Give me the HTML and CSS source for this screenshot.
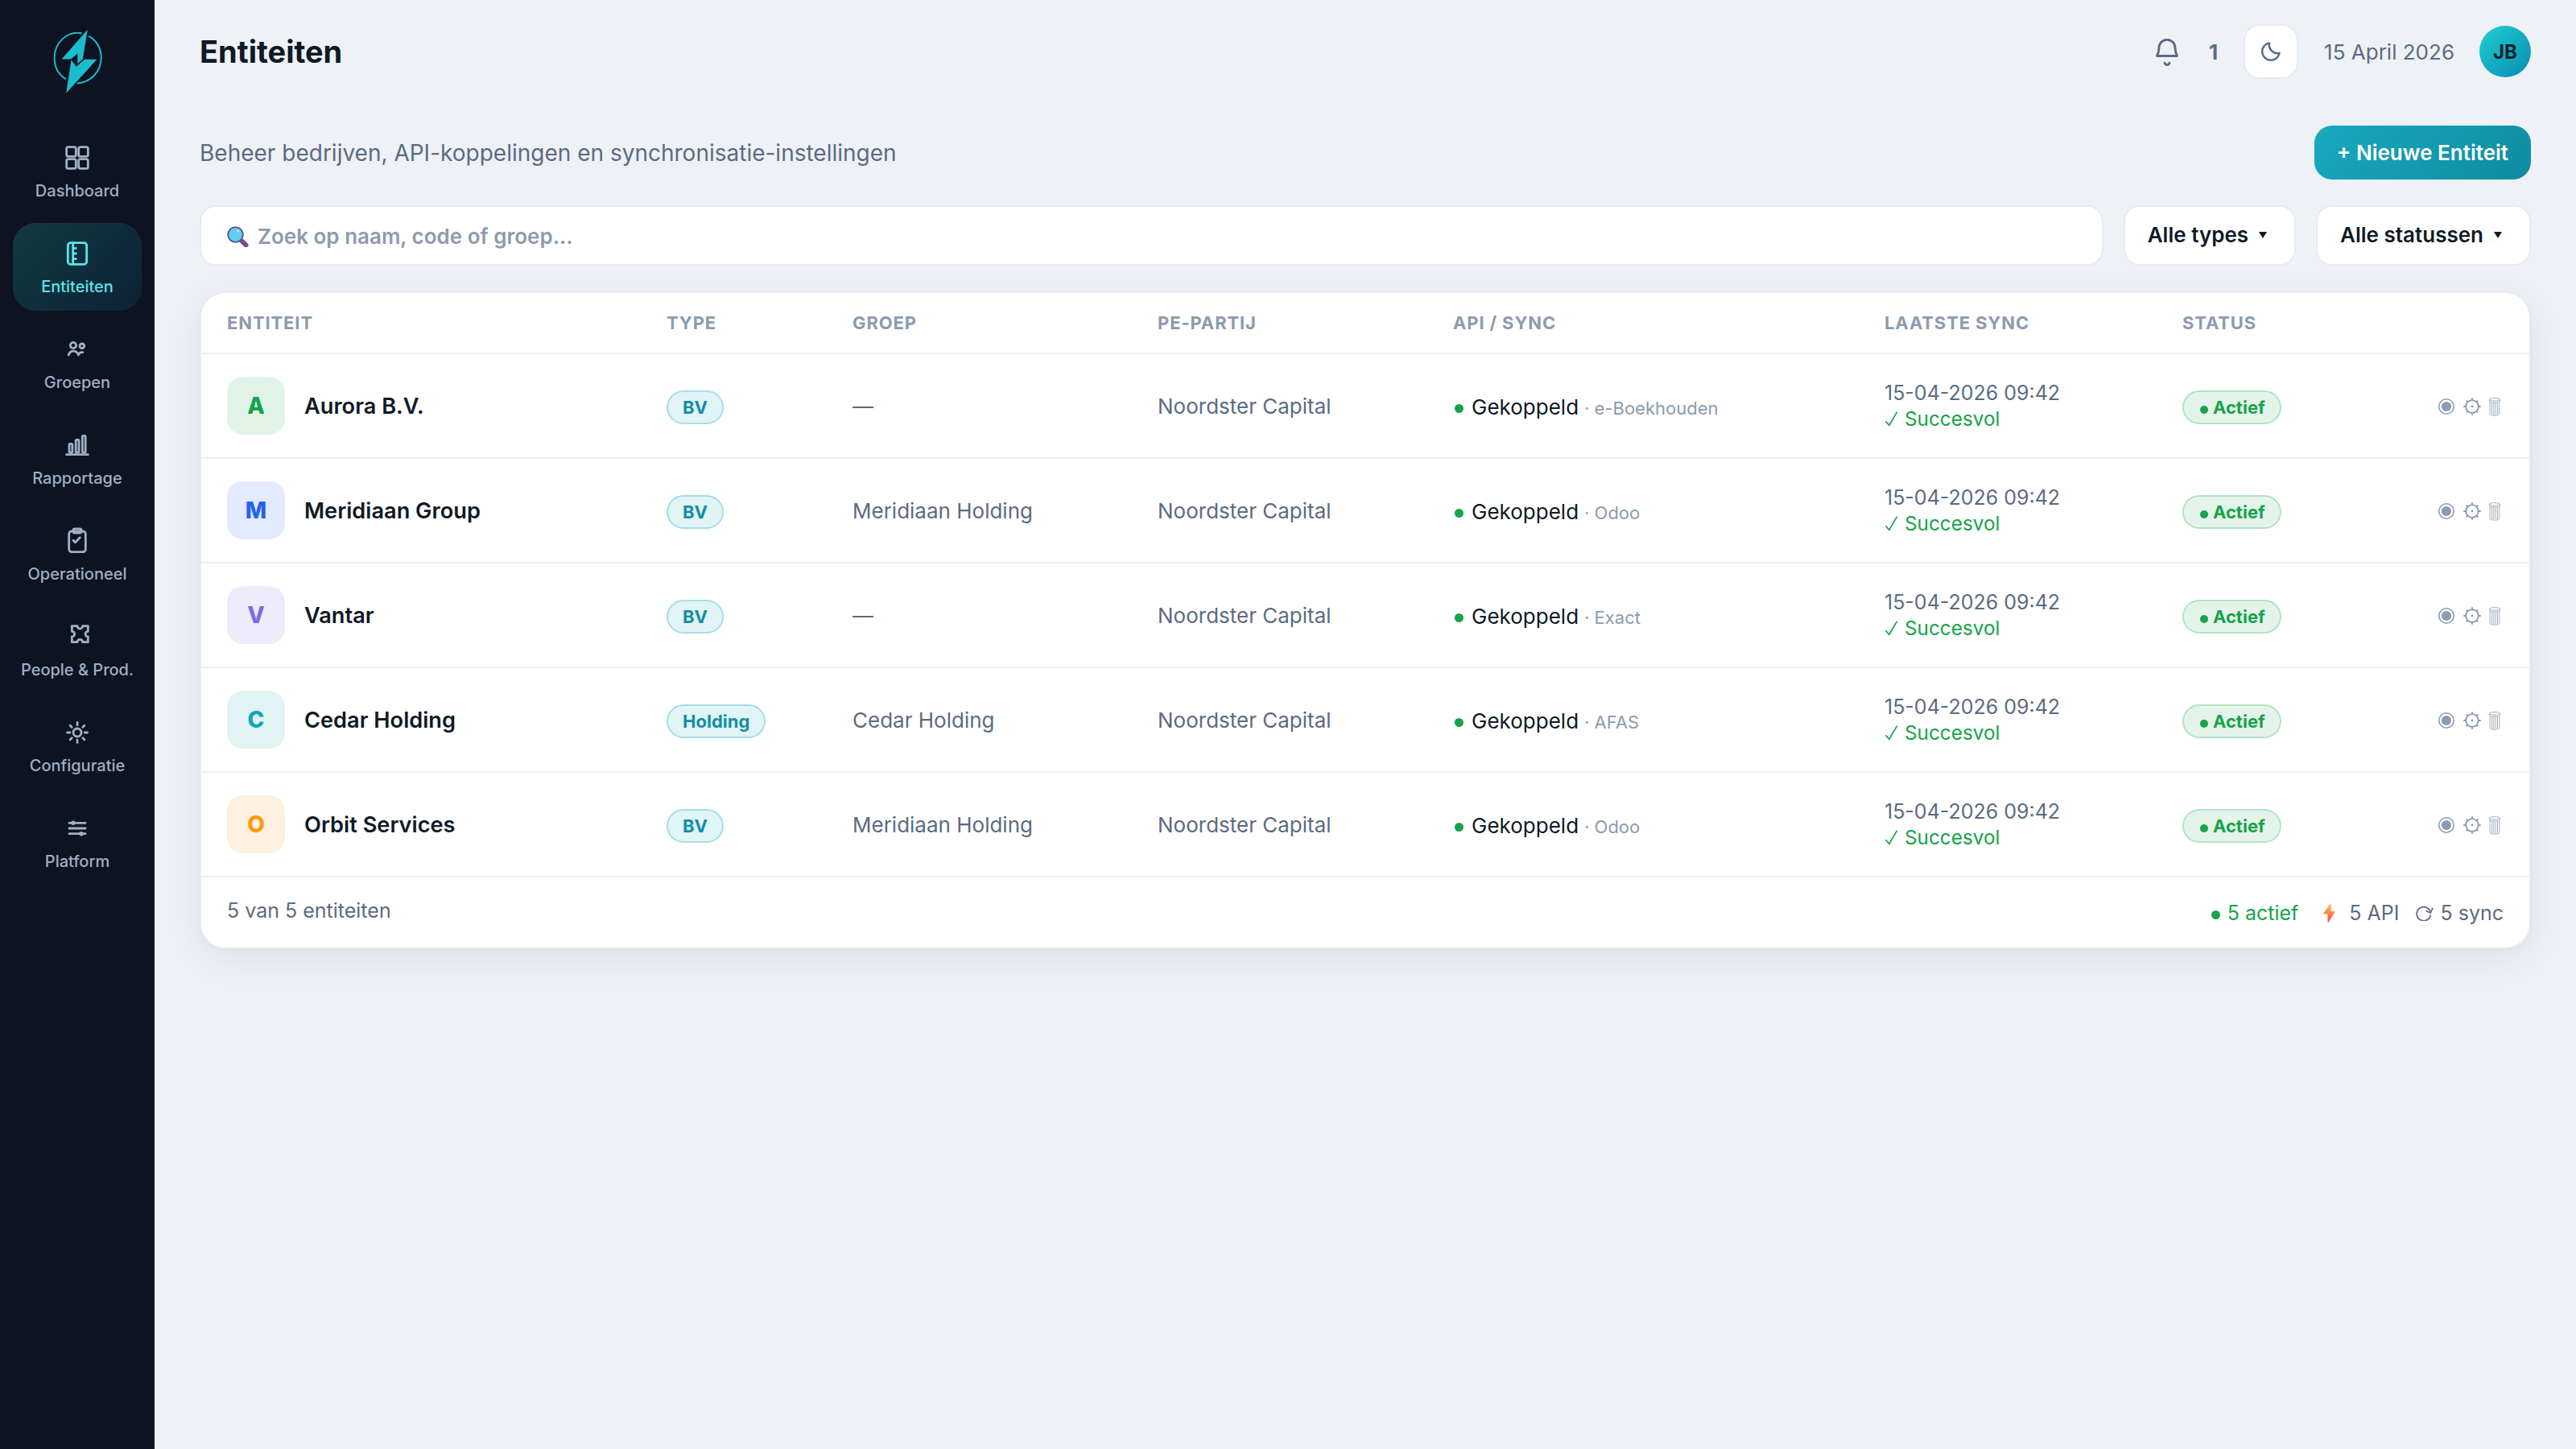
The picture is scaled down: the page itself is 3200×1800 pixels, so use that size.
FILE: index.html
```html
<!DOCTYPE html>
<html lang="nl">
<head>
    <meta charset="UTF-8">
    <meta name="viewport" content="width=device-width, initial-scale=1.0">
    <title>Entiteiten</title>
    <link rel="stylesheet" href="styles.css">
</head>
<body>

<!-- Shared icons -->
<svg class="sprite" width="0" height="0">
    <symbol id="i-check" viewBox="0 0 18 20">
        <path d="M1.5 13.2l4.3 5L15.6 1.6" fill="none" stroke="currentColor" stroke-width="1.7"/>
    </symbol>
    <symbol id="i-view" viewBox="0 0 22 22">
        <circle cx="11" cy="11" r="9.2" fill="none" stroke="currentColor" stroke-width="1.6"/>
        <circle cx="11" cy="11" r="6.1" fill="currentColor"/>
    </symbol>
    <symbol id="i-gear" viewBox="0 0 22 22">
        <g fill="none" stroke="currentColor" stroke-width="1.8">
            <circle cx="11" cy="11" r="7.8"/>
            <path d="M11 .3v2.9M11 18.8v2.9M.3 11h2.9M18.8 11h2.9M3.7 3.7l1.8 1.8M16.5 16.5l1.8 1.8M3.7 18.3l1.8-1.8M16.5 5.500l1.8-1.8"/>
        </g>
        <circle cx="11" cy="11" r="1.4" fill="currentColor"/>
    </symbol>
    <symbol id="i-trash" viewBox="0 0 14 23">
        <g fill="none" stroke="currentColor" stroke-width=".8">
            <ellipse cx="7" cy="2.300" rx="6.500" ry="1.700"/>
            <path d="M.5 2.300v2.200c0 2 13 2 13 0V2.300M1.200 5.400v14.800c0 2.600 11.600 2.600 11.600 0V5.400M3.600 6.200v14.600M5.900 6.400v15M8.200 6.400v15M10.500 6.200v14.600"/>
        </g>
    </symbol>
</svg>

<aside class="sidebar">
    <svg class="logo" viewBox="197 107 182 241" width="61" height="80">
        <g fill="none" stroke="#1bbccb" stroke-width="6">
            <path d="M303 123C250 112 201 158 201 215c0 35 17 64 43 80"/>
            <path d="M329 134c29 15 47 45 47 80 0 52-38 93-90 96"/>
        </g>
        <path fill="#1bbccb" d="M325 109L228 220h35l25-22-1 40 20-18z"/>
        <path fill="#1bbccb" d="M245 347l19-125 19 26 31-27h46z"/>
    </svg>
    <nav class="nav">
        <a class="nav-item">
            <svg class="nav-icon" viewBox="0 0 24 24"><rect x="4" y="4" width="7" height="7" rx="1.300"/><rect x="13" y="4" width="7" height="7" rx="1.300"/><rect x="4" y="13" width="7" height="7" rx="1.300"/><rect x="13" y="13" width="7" height="7" rx="1.300"/></svg>
            <span>Dashboard</span>
        </a>
        <a class="nav-item active">
            <svg class="nav-icon" viewBox="0 0 24 24"><rect x="5" y="4" width="14" height="16" rx="2"/><path d="M8.800 4v16M9 8h2M9 12h2M9 16h2"/></svg>
            <span>Entiteiten</span>
        </a>
        <a class="nav-item">
            <svg class="nav-icon" viewBox="0 0 24 24"><circle cx="9" cy="9" r="2.200"/><circle cx="15.500" cy="9.500" r="1.700"/><path d="M5.500 16.200c.6-1.900 1.900-2.900 3.500-2.900s3.200 1.100 3.900 2.900c.3-1.300 1.500-2.200 3.200-2"/></svg>
            <span>Groepen</span>
        </a>
        <a class="nav-item">
            <svg class="nav-icon" viewBox="0 0 24 24"><path d="M4 19h16"/><rect x="6" y="11" width="2.300" height="6.500" rx=".6"/><rect x="10.900" y="8" width="2.300" height="9.500" rx=".6"/><rect x="15.800" y="5" width="2.300" height="12.500" rx=".6"/></svg>
            <span>Rapportage</span>
        </a>
        <a class="nav-item">
            <svg class="nav-icon" viewBox="0 0 24 24"><rect x="5.800" y="4.800" width="12.400" height="15.400" rx="2"/><rect x="9" y="3" width="6" height="3" rx="1"/><path d="M9 11.500l1.500 1.500 3.500-3.500"/></svg>
            <span>Operationeel</span>
        </a>
        <a class="nav-item">
            <svg class="nav-icon" viewBox="0 0 24 24"><path d="M8 4h4a2 2 0 0 0 4 0h4v4a2 2 0 0 0 0 4v4h-4a2 2 0 0 0-4 0H8v-4a2 2 0 0 0 0-4z"/></svg>
            <span>People &amp; Prod.</span>
        </a>
        <a class="nav-item">
            <svg class="nav-icon" viewBox="0 0 24 24"><circle cx="12" cy="12" r="3"/><path d="M12 4.500v2M12 17.500v2M4.500 12h2M17.500 12h2M6.700 6.700l1.200 1.200M16.100 16.100l1.200 1.200M6.700 17.300l1.200-1.200M16.100 7.900l1.200-1.200"/></svg>
            <span>Configuratie</span>
        </a>
        <a class="nav-item">
            <svg class="nav-icon" viewBox="0 0 24 24"><path d="M6 8h12M6 12h12M6 16h12"/><circle cx="9" cy="8" r=".8"/><circle cx="15" cy="16" r=".8"/></svg>
            <span>Platform</span>
        </a>
    </nav>
</aside>

<main class="main">
    <header class="topbar">
        <h1>Entiteiten</h1>
        <div class="topbar-right">
            <svg class="bell" viewBox="0 0 24 24"><path d="M4.500 15.300c.9-1.600 1.400-3 1.500-6.100a6 6 0 0 1 12 0c.1 3.100.6 4.500 1.500 6.100z"/><path d="M10.200 20.500c.5 1.900 3.100 1.900 3.600 0"/></svg>
            <span class="count">1</span>
            <button class="theme-toggle">
                <svg viewBox="0 0 24 24" width="24" height="24"><path d="M22.600 13.900A10.800 10.800 0 1 1 10.100 1.400 10.400 10.400 0 0 0 22.600 13.900z"/></svg>
            </button>
            <span class="date">15 April 2026</span>
            <span class="user">JB</span>
        </div>
    </header>

    <div class="intro">
        <p>Beheer bedrijven, API-koppelingen en synchronisatie-instellingen</p>
        <button class="btn-primary">+ Nieuwe Entiteit</button>
    </div>

    <div class="filters">
        <div class="search">
            <svg viewBox="0 0 27 26" width="27" height="26">
                <path d="M18.500 18.500l5 5" stroke="#7d4a86" stroke-width="6" stroke-linecap="round"/>
                <circle cx="10.500" cy="10.500" r="9.300" fill="#62cdeb" stroke="#4b5590" stroke-width="1.800"/>
                <circle cx="13.600" cy="6" r="1.700" fill="#b5e8f7"/>
            </svg>
            <span>Zoek op naam, code of groep...</span>
        </div>
        <button class="select">Alle types <i class="caret"></i></button>
        <button class="select">Alle statussen <i class="caret"></i></button>
    </div>

    <section class="card">
        <table>
            <colgroup>
                <col class="c-name"><col class="c-type"><col class="c-group"><col class="c-pe"><col class="c-api"><col class="c-sync"><col class="c-status">
            </colgroup>
            <thead>
                <tr>
                    <th>Entiteit</th>
                    <th>Type</th>
                    <th>Groep</th>
                    <th>PE-partij</th>
                    <th>API / Sync</th>
                    <th>Laatste sync</th>
                    <th colspan="2">Status</th>
                </tr>
            </thead>
            <tbody>
                <tr>
                    <td><div class="entity"><span class="tile green">A</span>Aurora B.V.</div></td>
                    <td><span class="pill">BV</span></td>
                    <td class="muted">—</td>
                    <td class="muted">Noordster Capital</td>
                    <td><div class="api"><i class="dot"></i>Gekoppeld <small>· e-Boekhouden</small></div></td>
                    <td><div class="sync">15-04-2026 09:42<span class="ok"><svg><use href="#i-check"/></svg>Succesvol</span></div></td>
                    <td><span class="pill ok-pill"><i class="dot"></i>Actief</span></td>
                    <td><div class="actions"><svg><use href="#i-view"/></svg><svg><use href="#i-gear"/></svg><svg class="trash"><use href="#i-trash"/></svg></div></td>
                </tr>
                <tr>
                    <td><div class="entity"><span class="tile blue">M</span>Meridiaan Group</div></td>
                    <td><span class="pill">BV</span></td>
                    <td class="muted">Meridiaan Holding</td>
                    <td class="muted">Noordster Capital</td>
                    <td><div class="api"><i class="dot"></i>Gekoppeld <small>· Odoo</small></div></td>
                    <td><div class="sync">15-04-2026 09:42<span class="ok"><svg><use href="#i-check"/></svg>Succesvol</span></div></td>
                    <td><span class="pill ok-pill"><i class="dot"></i>Actief</span></td>
                    <td><div class="actions"><svg><use href="#i-view"/></svg><svg><use href="#i-gear"/></svg><svg class="trash"><use href="#i-trash"/></svg></div></td>
                </tr>
                <tr>
                    <td><div class="entity"><span class="tile purple">V</span>Vantar</div></td>
                    <td><span class="pill">BV</span></td>
                    <td class="muted">—</td>
                    <td class="muted">Noordster Capital</td>
                    <td><div class="api"><i class="dot"></i>Gekoppeld <small>· Exact</small></div></td>
                    <td><div class="sync">15-04-2026 09:42<span class="ok"><svg><use href="#i-check"/></svg>Succesvol</span></div></td>
                    <td><span class="pill ok-pill"><i class="dot"></i>Actief</span></td>
                    <td><div class="actions"><svg><use href="#i-view"/></svg><svg><use href="#i-gear"/></svg><svg class="trash"><use href="#i-trash"/></svg></div></td>
                </tr>
                <tr>
                    <td><div class="entity"><span class="tile teal">C</span>Cedar Holding</div></td>
                    <td><span class="pill">Holding</span></td>
                    <td class="muted">Cedar Holding</td>
                    <td class="muted">Noordster Capital</td>
                    <td><div class="api"><i class="dot"></i>Gekoppeld <small>· AFAS</small></div></td>
                    <td><div class="sync">15-04-2026 09:42<span class="ok"><svg><use href="#i-check"/></svg>Succesvol</span></div></td>
                    <td><span class="pill ok-pill"><i class="dot"></i>Actief</span></td>
                    <td><div class="actions"><svg><use href="#i-view"/></svg><svg><use href="#i-gear"/></svg><svg class="trash"><use href="#i-trash"/></svg></div></td>
                </tr>
                <tr>
                    <td><div class="entity"><span class="tile orange">O</span>Orbit Services</div></td>
                    <td><span class="pill">BV</span></td>
                    <td class="muted">Meridiaan Holding</td>
                    <td class="muted">Noordster Capital</td>
                    <td><div class="api"><i class="dot"></i>Gekoppeld <small>· Odoo</small></div></td>
                    <td><div class="sync">15-04-2026 09:42<span class="ok"><svg><use href="#i-check"/></svg>Succesvol</span></div></td>
                    <td><span class="pill ok-pill"><i class="dot"></i>Actief</span></td>
                    <td><div class="actions"><svg><use href="#i-view"/></svg><svg><use href="#i-gear"/></svg><svg class="trash"><use href="#i-trash"/></svg></div></td>
                </tr>
            </tbody>
        </table>
        <footer class="card-footer">
            <span class="shown">5 van 5 entiteiten</span>
            <div class="totals">
                <span class="total active-total"><i class="dot"></i>5 actief</span>
                <span class="total api-total">
                    <svg viewBox="0 0 15 24" width="15" height="24">
                        <defs><linearGradient id="bolt" x1="0" y1="0" x2="0" y2="1"><stop offset="0" stop-color="#fcc04f"/><stop offset=".5" stop-color="#fb8b48"/><stop offset="1" stop-color="#ef3f55"/></linearGradient></defs>
                        <path fill="url(#bolt)" d="M9.200.2L.4 12.600c-.3.400 0 .9.500.9h4.600v9.800c0 .7.700.9 1.100.3L14.500 11c.300-.5 0-.9-.5-.9H9.800V.6c0-.6-.4-.7-.6-.4z"/>
                    </svg>5 API</span>
                <span class="total sync-total">
                    <svg viewBox="0 0 22 20" width="22" height="20"><path d="M17.800 8A8.600 8.600 0 1 0 18.300 12.500M12.600 7.200l5.600 2.900 3-6.200" fill="none" stroke="currentColor" stroke-width="1.700"/></svg>5 sync</span>
            </div>
        </footer>
    </section>
</main>

</body>
</html>
```
FILE: styles.css
```css
* {
    box-sizing: border-box;
}
body {
    margin: 0;
    display: flex;
    min-height: 100vh;
    font-family: Inter, "Noto Sans", sans-serif;
    font-size: 26px;
    color: #0f1a26;
    background-color: #eef1f6;
}
button {
    font-family: inherit;
    font-size: 26px;
    color: inherit;
    cursor: pointer;
}
.sprite {
    position: absolute;
}

/* Sidebar */
.sidebar {
    width: 192px;
    flex: none;
    padding: 36px 16px;
    background-color: #0d1321;
    display: flex;
    flex-direction: column;
    align-items: center;
}
.logo {
    margin-bottom: 42px;
}
.nav {
    width: 100%;
    display: flex;
    flex-direction: column;
    gap: 10px;
}
.nav-item {
    height: 109px;
    padding-top: 18px;
    display: flex;
    flex-direction: column;
    align-items: center;
    gap: 9px;
    border-radius: 28px;
    font-size: 20px;
    font-weight: 500;
    line-height: 25px;
    color: #9fb0c6;
    white-space: nowrap;
}
.nav-item.active {
    color: #5be3ea;
    background: linear-gradient(135deg, #123a43, #0c2135);
}
.nav-icon,
.bell {
    width: 40px;
    height: 40px;
    fill: none;
    stroke: currentColor;
    stroke-width: 1.7;
    stroke-linecap: round;
    stroke-linejoin: round;
}

/* Top bar */
.main {
    flex: 1;
    padding: 30px 56px;
}
.topbar {
    height: 68px;
    display: flex;
    justify-content: space-between;
    align-items: center;
}
h1 {
    margin: 0;
    font-size: 38px;
    font-weight: 700;
}
.topbar-right {
    display: flex;
    align-items: center;
    gap: 32px;
    color: #5b6b82;
}
.count {
    font-weight: 700;
}
.theme-toggle {
    width: 68px;
    height: 68px;
    padding: 0;
    display: flex;
    justify-content: center;
    align-items: center;
    color: #5b6b82;
    background-color: #fff;
    border: 2px solid #e6ebf2;
    border-radius: 20px;
}
.theme-toggle path {
    fill: none;
    stroke: currentColor;
    stroke-width: 2.4;
    stroke-linejoin: round;
}
.date {
    margin-right: -1px;
}
.user {
    width: 64px;
    height: 64px;
    display: flex;
    justify-content: center;
    align-items: center;
    border-radius: 50%;
    font-size: 24px;
    font-weight: 700;
    color: #06222b;
    background: linear-gradient(135deg, #1fd1cf, #088bb2);
}

/* Intro and filters */
.intro {
    margin-top: 58px;
    height: 67px;
    display: flex;
    justify-content: space-between;
    align-items: center;
}
.intro p {
    margin: 0;
    font-size: 28px;
    color: #5b6b82;
}
.btn-primary {
    height: 67px;
    padding: 0 28px;
    border: none;
    border-radius: 22px;
    font-weight: 600;
    color: #fff;
    background: linear-gradient(135deg, #18aac0, #0f8b9f);
}
.filters {
    margin-top: 32px;
    display: flex;
    gap: 25px;
}
.search,
.select {
    height: 75px;
    display: flex;
    align-items: center;
    background-color: #fff;
    border: 2px solid #e6ebf2;
    border-radius: 20px;
    font-weight: 600;
}
.search {
    flex: 1;
    padding: 2px 32px 0;
    gap: 11px;
    color: #8b9bb0;
}
.select {
    padding: 0 34px 2px 28px;
    gap: 13px;
}
.caret {
    border: 5px solid transparent;
    border-top: 8px solid #0f1a26;
    border-bottom: 0;
}

/* Table */
.card {
    margin-top: 32px;
    background-color: #fff;
    border: 2px solid #e6ebf2;
    border-radius: 32px;
    box-shadow: 0 12px 48px rgba(20, 30, 70, 0.07), 0 2px 4px rgba(20, 30, 70, 0.03);
}
table {
    width: 100%;
    table-layout: fixed;
    border-collapse: separate;
    border-spacing: 0;
}
.c-name { width: 546px; }
.c-type { width: 231px; }
.c-group { width: 379px; }
.c-pe { width: 367px; }
.c-api { width: 536px; }
.c-sync { width: 370px; }
.c-status { width: 231px; }
th {
    height: 76px;
    padding: 0 0 0 32px;
    border-bottom: 2px solid #ebeff4;
    text-align: left;
    text-transform: uppercase;
    font-size: 22px;
    font-weight: 700;
    letter-spacing: 0.88px;
    color: #8b9bb0;
}
td {
    height: 130px;
    padding: 0 0 0 32px;
    border-bottom: 2px solid #ebeff4;
}
.entity {
    display: flex;
    align-items: center;
    gap: 24px;
    font-size: 27.2px;
    font-weight: 600;
}
.tile {
    width: 72px;
    height: 72px;
    display: flex;
    justify-content: center;
    align-items: center;
    border-radius: 20px;
    font-size: 28px;
    font-weight: 800;
}
.green { color: #16a34a; background-color: #e2f4e8; }
.blue { color: #2563eb; background-color: #e4eafe; }
.purple { color: #7c6be8; background-color: #eeebfb; }
.teal { color: #12a5b8; background-color: #e1f4f6; }
.orange { color: #f59e0b; background-color: #fef1df; }
.muted {
    color: #5b6b82;
}
.pill {
    height: 42px;
    margin-top: 4px;
    padding: 0 18px;
    display: inline-flex;
    align-items: center;
    vertical-align: middle;
    border: 2px solid #a5dfe6;
    border-radius: 21px;
    font-size: 22px;
    font-weight: 700;
    color: #128fa3;
    background-color: #e1f4f6;
}
.ok-pill {
    gap: 6px;
    padding: 0 18px 0 20px;
    color: #16a34a;
    border-color: #b3e2c4;
    background-color: #e5f4ea;
}
.dot {
    width: 11px;
    height: 11px;
    margin-top: 5px;
    flex: none;
    border-radius: 50%;
    background-color: #16a34a;
}
.ok-pill .dot {
    width: 10px;
    height: 10px;
}
.api {
    padding: 2px 0 0 2px;
    display: flex;
    align-items: center;
}
.api .dot {
    margin-right: 10px;
}
.api small {
    margin: 3px 0 0 7px;
    font-size: 22px;
    color: #8b9bb0;
}
.sync {
    font-size: 25px;
    line-height: 32px;
    color: #5b6b82;
}
.ok {
    display: flex;
    align-items: center;
    gap: 7px;
    font-size: 24.3px;
    color: #16a34a;
}
.ok svg {
    width: 18px;
    height: 20px;
}
.actions {
    padding: 2px 36px 0 0;
    display: flex;
    justify-content: flex-end;
    align-items: center;
    gap: 10px;
    color: #8b9bb0;
}
.actions svg {
    width: 22px;
    height: 22px;
}
.actions .trash {
    width: 14px;
    height: 23px;
}
.card-footer {
    height: 87px;
    padding: 0 32px;
    display: flex;
    justify-content: space-between;
    align-items: center;
    font-size: 25px;
    color: #5b6b82;
}
.shown {
    padding-bottom: 5px;
}
.totals,
.total {
    display: flex;
    align-items: center;
}
.active-total {
    gap: 9px;
    color: #16a34a;
}
.api-total {
    gap: 17px;
    margin-left: 31px;
}
.sync-total {
    gap: 8px;
    margin-left: 21px;
}
```
